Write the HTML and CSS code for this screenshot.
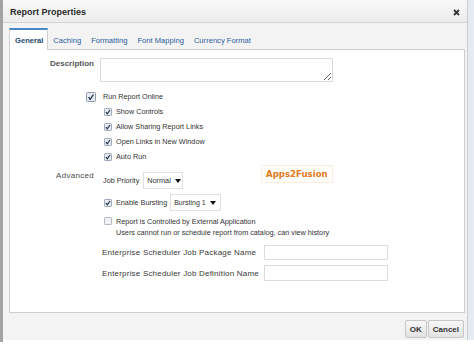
FILE: index.html
```html
<!DOCTYPE html>
<html lang="en">
<head>
  <meta charset="UTF-8" />
  <title>Report Properties</title>
  <link rel="stylesheet" href="styles.css">
</head>
<body>
  <div class="edge-left"></div>
  <div class="dialog">
    <div class="titlebar">
      <span class="title">Report Properties</span>
      <svg class="close" viewBox="0 0 7 7"><path d="M1 1 L6 6 M6 1 L1 6"/></svg>
    </div>

    <div class="tabs">
      <div class="tab active">General</div>
      <div class="tab">Caching</div>
      <div class="tab">Formatting</div>
      <div class="tab">Font Mapping</div>
      <div class="tab">Currency Format</div>
    </div>

    <div class="panel">
      <!-- description -->
      <div class="row row-desc">
        <div class="label">Description</div>
        <div class="field"><textarea class="desc"></textarea></div>
      </div>

      <!-- online options -->
      <div class="row row-check row-main">
        <div class="label">
          <svg class="cb cb-lg" viewBox="0 0 10 10"><rect x="0.5" y="0.5" width="9" height="9" rx="1"/><path d="M2.6 5.1 L4.2 7.3 L7.4 2.5"/></svg>
        </div>
        <div class="field main-text">Run Report Online</div>
      </div>
      <div class="row row-check">
        <div class="label"></div>
        <div class="field sub">
          <svg class="cb" viewBox="0 0 9 9"><rect x="0.5" y="0.5" width="8" height="8" rx="1"/><path d="M2.2 4.6 L3.7 6.6 L6.7 2.2"/></svg>
          <span>Show Controls</span>
        </div>
      </div>
      <div class="row row-check">
        <div class="label"></div>
        <div class="field sub">
          <svg class="cb" viewBox="0 0 9 9"><rect x="0.5" y="0.5" width="8" height="8" rx="1"/><path d="M2.2 4.6 L3.7 6.6 L6.7 2.2"/></svg>
          <span>Allow Sharing Report Links</span>
        </div>
      </div>
      <div class="row row-check">
        <div class="label"></div>
        <div class="field sub">
          <svg class="cb" viewBox="0 0 9 9"><rect x="0.5" y="0.5" width="8" height="8" rx="1"/><path d="M2.2 4.6 L3.7 6.6 L6.7 2.2"/></svg>
          <span>Open Links in New Window</span>
        </div>
      </div>
      <div class="row row-check">
        <div class="label"></div>
        <div class="field sub">
          <svg class="cb" viewBox="0 0 9 9"><rect x="0.5" y="0.5" width="8" height="8" rx="1"/><path d="M2.2 4.6 L3.7 6.6 L6.7 2.2"/></svg>
          <span>Auto Run</span>
        </div>
      </div>

      <!-- advanced -->
      <div class="row row-adv">
        <div class="label label-adv">Advanced</div>
        <div class="field inline">
          <span class="job">Job Priority</span>
          <div class="select sel-priority">Normal <i class="arrow"></i></div>
        </div>
      </div>
      <div class="row row-burst">
        <div class="label"></div>
        <div class="field sub">
          <svg class="cb" viewBox="0 0 9 9"><rect x="0.5" y="0.5" width="8" height="8" rx="1"/><path d="M2.2 4.6 L3.7 6.6 L6.7 2.2"/></svg>
          <span>Enable Bursting</span>
          <div class="select sel-burst">Bursting 1 <i class="arrow"></i></div>
        </div>
      </div>
      <div class="row row-ext">
        <div class="label"></div>
        <div class="field sub top">
          <svg class="cb off" viewBox="0 0 9 9"><rect x="0.5" y="0.5" width="8" height="8" rx="1"/></svg>
          <div class="ext-text">
            <div>Report is Controlled by External Application</div>
            <div>Users cannot run or schedule report from catalog, can view history</div>
          </div>
        </div>
      </div>

      <!-- scheduler -->
      <div class="row row-sched">
        <div class="label"></div>
        <div class="field inline">
          <span class="sched-label">Enterprise Scheduler Job Package Name</span>
          <input class="text-input" type="text">
        </div>
      </div>
      <div class="row row-sched2">
        <div class="label"></div>
        <div class="field inline">
          <span class="sched-label">Enterprise Scheduler Job Definition Name</span>
          <input class="text-input" type="text">
        </div>
      </div>

      <div class="watermark">Apps2Fusion</div>
    </div>

    <div class="footer">
      <button class="btn">OK</button>
      <button class="btn">Cancel</button>
    </div>
  </div>
  <div class="edge-right"></div>
</body>
</html>
```

FILE: styles.css
```css
:root {
  --text: #333;
  --label: #4a4a4a;
  --link: #2a5d9c;
  --border: #cfcfcf;
  --dialog-bg: #f3f3f3;
}
* { box-sizing: border-box; margin: 0; padding: 0; }
body {
  display: flex;
  width: 474px;
  height: 344px;
  overflow: hidden;
  background: #fff;
  font-family: 'Liberation Sans', Arial, sans-serif;
  font-size: 7.25px;
  color: var(--text);
}
.edge-left {
  width: 3px;
  height: 342px;
  background: #a3a3a3;
}
.edge-right {
  flex: 1;
  height: 340px;
  background: #e6ebf1;
}
.dialog {
  width: 465px;
  height: 340px;
  display: flex;
  flex-direction: column;
  background: var(--dialog-bg);
  border-right: 1px solid #c9ced4;
}

/* title bar */
.titlebar {
  height: 23px;
  display: flex;
  align-items: center;
  justify-content: space-between;
  padding: 2px 7px 0 7px;
  background: linear-gradient(#f9f9f9, #ececec);
  border-bottom: 1px solid #d4d4d4;
}
.title { font-size: 9px; font-weight: bold; color: #2b2b2b; }
.close { width: 7px; height: 7px; margin-top: 1px; }
.close path { stroke: #333; stroke-width: 1.8; fill: none; }

/* tabs */
.tabs {
  display: flex;
  align-items: flex-start;
  height: 21px;
  margin: 5px 0 0 6px;
}
.tab {
  height: 21px;
  padding: 8px 5px 0 5px;
  font-size: 7.6px;
  line-height: 10px;
  color: var(--link);
  white-space: nowrap;
}
.tab.active {
  position: relative;
  z-index: 1;
  height: 22px;
  padding: 6px 4px 0 5px;
  background: #fff;
  border: 1px solid var(--border);
  border-top: 2px solid #4a87c6;
  border-bottom: none;
  font-weight: bold;
  color: #26486f;
}

/* panel */
.panel {
  position: relative;
  flex: 1;
  margin: 0 2px 0 6px;
  padding-top: 8px;
  background: #fff;
  border: 1px solid var(--border);
}
.row {
  display: grid;
  grid-template-columns: 84px 1fr;
  column-gap: 6px;
  align-items: center;
}
.label {
  text-align: right;
  font-size: 8px;
  letter-spacing: 0.3px;
  color: var(--label);
}
.row-desc { align-items: start; }
.row-desc .label { font-weight: bold; color: #555; letter-spacing: 0; line-height: 10px; padding-top: 1px; }
.desc {
  display: block;
  width: 233px;
  height: 24px;
  border: 1px solid #d6d9dd;
  border-radius: 1px;
  resize: both;
  background: #fff;
}
.row-check { height: 15px; }
.row-main { margin-top: 7px; }
.row-main .label { display: flex; justify-content: flex-end; margin-right: -2px; }
.main-text { padding-left: 3px; }
.field.sub {
  display: flex;
  align-items: center;
  gap: 4px;
  padding-left: 4px;
}
.field.sub.top { align-items: flex-start; }
.cb { width: 8px; height: 8px; flex: none; }
.cb-lg { width: 10px; height: 10px; }
.cb rect { fill: #e8ecf1; stroke: #8d9aac; }
.cb path { fill: none; stroke: #1b2d4d; stroke-width: 1.3; }
.cb.off rect { fill: #eef0f3; stroke: #a6afbb; }

/* advanced */
.row-adv { margin-top: 8px; }
.label-adv { align-self: start; margin-top: -1px; }
.field.inline { display: flex; align-items: center; }
.job { padding-left: 3px; margin-right: 4px; }
.select {
  display: flex;
  align-items: center;
  gap: 4px;
  height: 17px;
  padding: 0 4px 0 3px;
  background: #fff;
  border: 1px solid #e0e0e0;
  font-size: 7.3px;
  white-space: nowrap;
}
.sel-priority { width: 40px; }
.sel-burst { width: 51px; margin-left: -1px; font-size: 7px; }
.arrow {
  width: 0;
  height: 0;
  margin-left: auto;
  border-left: 3px solid transparent;
  border-right: 3px solid transparent;
  border-top: 4px solid #111;
}
.row-burst { margin-top: 5px; }
.row-ext { margin-top: 5px; }
.row-ext .cb { margin-top: 1px; }
.ext-text { line-height: 11px; }

/* scheduler */
.row-sched { margin-top: 7px; }
.row-sched2 { margin-top: 5px; }
.sched-label {
  width: 164px;
  padding-left: 2px;
  font-size: 8px;
  letter-spacing: 0.2px;
  color: #3a3a3a;
  white-space: nowrap;
}
.text-input {
  width: 124px;
  height: 15px;
  border: 1px solid #dcdcdc;
  background: #fff;
}
.row-sched2 .text-input { height: 16px; }

.watermark {
  position: absolute;
  left: 251px;
  top: 115px;
  padding: 3px 4px;
  background: #fffdf9;
  border: 1px solid #f7efe4;
  font-family: 'DejaVu Sans', sans-serif;
  font-size: 8.6px;
  font-weight: bold;
  color: #e37a1c;
}

/* footer */
.footer {
  height: 27px;
  display: flex;
  justify-content: flex-end;
  align-items: flex-start;
  gap: 1px;
  padding: 7px 3px 0 0;
}
.btn {
  height: 18px;
  padding: 0 4px;
  font-family: inherit;
  font-size: 8px;
  font-weight: bold;
  color: #333;
  background: linear-gradient(#f7f7f7, #e2e2e2);
  border: 1px solid #c6c6c6;
  border-radius: 2px;
}
```
